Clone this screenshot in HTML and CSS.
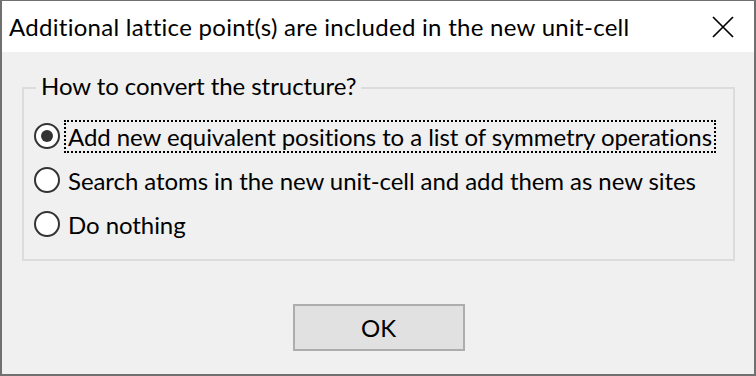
FILE: index.html
```html
<!DOCTYPE html>
<html>
    <head>
        <title>Additional lattice point(s)</title>
        <link rel="stylesheet" href="styles.css">
    </head>
    <body>
        <div class="window">
            <header class="titlebar">
                <span class="title">Additional lattice point(s) are included in the new unit-cell</span>
                <span class="close">
                    <svg width="22" height="22" viewBox="0 0 22 22">
                        <path d="M1 1 L21 21 M21 1 L1 21" stroke="#000" stroke-width="1.7" fill="none"/>
                    </svg>
                </span>
            </header>
            <div class="content">
                <fieldset class="group">
                    <legend>How to convert the structure?</legend>
                    <div class="options">
                        <label class="option">
                            <span class="radio checked"></span>
                            <span class="text focus">Add new equivalent positions to a list of symmetry operations</span>
                        </label>
                        <label class="option">
                            <span class="radio"></span>
                            <span class="text">Search atoms in the new unit-cell and add them as new sites</span>
                        </label>
                        <label class="option">
                            <span class="radio"></span>
                            <span class="text">Do nothing</span>
                        </label>
                    </div>
                </fieldset>
                <div class="actions">
                    <button class="ok">OK</button>
                </div>
            </div>
        </div>
    </body>
</html>
```

FILE: styles.css
```css
html, body {
    margin: 0;
    height: 100%;
}
body {
    font-family: Lato, "Noto Sans", sans-serif;
    font-size: 24px;
    color: #000;
}
.window {
    box-sizing: border-box;
    height: 376px;
    display: flex;
    flex-direction: column;
    border: 2px solid #707070;
    border-top-width: 1px;
    background: #f0f0f0;
}
.titlebar {
    height: 51px;
    flex: none;
    display: flex;
    align-items: center;
    justify-content: space-between;
    background: #fff;
    padding-left: 7px;
    padding-right: 20px;
}
.title {
    line-height: 32px;
    letter-spacing: 0.28px;
}
.close {
    display: flex;
}
.content {
    flex: 1;
    padding: 18px 19px 0 20px;
}
.group {
    margin: 0;
    padding: 0;
    border: 2px solid #dcdcdc;
}
.group legend {
    margin-left: 12px;
    padding: 0 5px 4px;
    line-height: 32px;
    letter-spacing: -0.05px;
}
.options {
    padding: 8px 0 13px 10px;
}
.option {
    height: 44px;
    display: flex;
    align-items: center;
}
.radio {
    box-sizing: border-box;
    width: 26px;
    height: 26px;
    border: 2px solid #333;
    border-radius: 50%;
    background: #fff;
    display: flex;
    align-items: center;
    justify-content: center;
    flex: none;
}
.radio.checked::after {
    content: "";
    width: 12px;
    height: 12px;
    border-radius: 50%;
    background: #333;
}
.text {
    margin-left: 4px;
    padding: 0 2px;
    border: 2px solid transparent;
    line-height: 29px;
    letter-spacing: -0.07px;
}
.text.focus {
    border: 2px dotted #000;
}
.actions {
    display: flex;
    justify-content: center;
    padding-top: 43px;
}
.ok {
    box-sizing: border-box;
    width: 172px;
    height: 47px;
    border: 2px solid #adadad;
    background: #e1e1e1;
    font: inherit;
    color: #000;
    padding: 0;
}
```
